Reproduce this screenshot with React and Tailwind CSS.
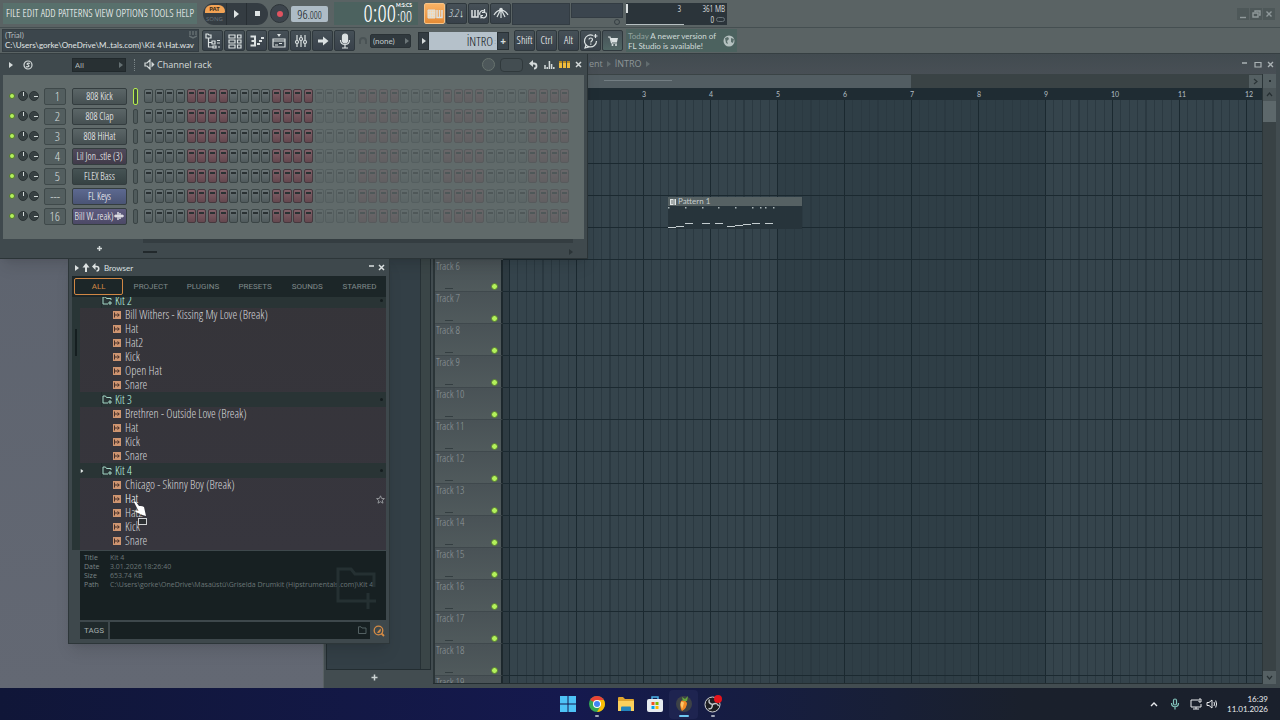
import clsx from 'clsx'

const condensed = 'font-["Open_Sans_Condensed_Light","Roboto_Condensed","Liberation_Sans_Narrow",sans-serif]'

const menus = ['FILE', 'EDIT', 'ADD', 'PATTERNS', 'VIEW', 'OPTIONS', 'TOOLS', 'HELP']

const channels = [
  { num: '1', name: '808 Kick', tone: 'from-[#5b6667] to-[#465052]', selected: true },
  { num: '2', name: '808 Clap', tone: 'from-[#5b6667] to-[#465052]' },
  { num: '3', name: '808 HiHat', tone: 'from-[#5b6667] to-[#465052]' },
  { num: '4', name: 'Lil Jon..stle (3)', tone: 'from-[#504a5b] to-[#413b4a]' },
  { num: '5', name: 'FLEX Bass', tone: 'from-[#465354] to-[#364243]' },
  { num: '---', name: 'FL Keys', tone: 'from-[#5d6990] to-[#4a5475]' },
  { num: '16', name: 'Bill W..reak)', tone: 'from-[#5f5c80] to-[#4c4966]', wave: true },
]

const folders = [
  { name: 'Kit 2', items: ['Bill Withers - Kissing My Love (Break)', 'Hat', 'Hat2', 'Kick', 'Open Hat', 'Snare'] },
  { name: 'Kit 3', items: ['Brethren - Outside Love (Break)', 'Hat', 'Kick', 'Snare'] },
  { name: 'Kit 4', open: true, items: ['Chicago - Skinny Boy (Break)', 'Hat', 'Hat2', 'Kick', 'Snare'] },
]

const info = [
  ['Title', 'Kit 4'],
  ['Date', '3.01.2026 18:26:40'],
  ['Size', '653.74 KB'],
  ['Path', 'C:\\Users\\gorke\\OneDrive\\Masaüstü\\Griselda Drumkit (Hipstrumentals.com)\\Kit 4'],
]

const tracks = [6, 7, 8, 9, 10, 11, 12, 13, 14, 15, 16, 17, 18, 19]
const bars = [3, 4, 5, 6, 7, 8, 9, 10, 11, 12]

function Icon({ children, size = 16, w, h, className }) {
  return (
    <svg width={w || size} height={h || size} viewBox={`0 0 ${w || 16} ${h || 16}`} fill="none" stroke="currentColor"
      strokeWidth="1.2" className={clsx('shrink-0', className)} aria-hidden="true">
      {children}
    </svg>
  )
}

function Caret({ className }) {
  return <Icon w={4} h={6} className={className}><path d="M0 0L4 3L0 6Z" fill="currentColor" stroke="none" /></Icon>
}

function ToolButton({ label, className, children }) {
  return (
    <button aria-label={label}
      className={clsx('w-[21px] h-[21px] shrink-0 flex items-center justify-center rounded-xs border border-[#2f383d] bg-linear-to-b from-[#465057] to-[#38414a] text-[#dbe1e2]', className)}>
      {children}
    </button>
  )
}

function TopRow() {
  return (
    <div className="h-[28px] flex items-center border-b border-[#454f51] px-[3px]">
      <nav className={clsx('w-[194px] h-[21px] shrink-0 flex items-center justify-between bg-[#58706c] px-[3px] text-[11px] text-white', condensed)}>
        {menus.map(m => <button key={m}>{m}</button>)}
      </nav>

      {/* Transport */}
      <div className="ml-[6px] h-[22px] flex rounded-full bg-[#343c42] overflow-hidden shrink-0">
        <button className="w-[23px] h-full flex flex-col justify-start items-center text-[6px] leading-[8px] text-[#66717a]">
          <span className="mt-[2px] w-[20px] h-[8px] rounded-t-lg rounded-br-xs bg-[#f2a355] text-[#3d2b18] font-bold">PAT</span>
          <span className="mt-[2px]">SONG</span>
        </button>
        <button aria-label="Play" className="w-[20px] flex items-center justify-center text-[#dfe4e4] border-l border-[#272e33]">
          <Icon w={5} h={8}><path d="M0 0L5 4L0 8Z" fill="currentColor" stroke="none" /></Icon>
        </button>
        <button aria-label="Stop" className="w-[22px] flex items-center justify-center border-l border-[#272e33]">
          <span className="w-[5px] h-[5px] bg-[#dfe4e4]" />
        </button>
      </div>
      <button aria-label="Record" className="ml-[2px] w-[19px] h-[19px] shrink-0 rounded-full bg-[#3c444c] border border-[#2d3439] flex items-center justify-center">
        <span className="w-[6px] h-[6px] rounded-full bg-[#e05360]" />
      </button>
      <button className={clsx('ml-[2px] w-[37px] h-[16px] shrink-0 rounded-xs bg-[#aebcc6] text-[#0c1215] flex items-baseline justify-center text-[13px] leading-[16px]', condensed)}>
        96<span className="text-[10px]">.000</span>
      </button>

      <div className={clsx('ml-[6px] w-[84px] h-[23px] shrink-0 bg-[#4c625f] text-white flex items-center justify-end pr-[6px]', condensed)}>
        <span className="text-[23px] leading-[23px]">0:00</span>
        <span className="flex flex-col items-end">
          <span className="text-[5px] leading-[6px] font-bold font-[Lato,sans-serif]">M:S:CS</span>
          <span className="text-[15px] leading-[17px]">:00</span>
        </span>
      </div>

      <div className="ml-[6px] flex gap-px shrink-0">
        <ToolButton label="Typing keyboard" className="from-[#f9b264] to-[#e58b35] border-[#f7c387] text-[#4a2d12]">
          <Icon><path d="M1 4H8V12H1Z" fill="#fbd5a3" strokeWidth="1" /><path d="M1 6.700H8M1 9.300H8M3.300 4V12M5.700 4V12" strokeWidth=".8" /><path d="M10 4V11.500H15V4M12.500 4V11" strokeWidth="1.500" /></Icon>
        </ToolButton>
        <ToolButton label="Countdown" className={clsx('text-[11px] italic', condensed)}>3.2↓</ToolButton>
        <ToolButton label="Loop record">
          <Icon><path d="M1 4V11H7V4M4 4V11" strokeWidth="1.500" /><path d="M9 9A3 3 0 0 1 13 5L14 6M14.500 6.500A3 3 0 0 1 10.500 11L9.500 10M13.500 3V6.500H11M10 12.500V9.500H12" /></Icon>
        </ToolButton>
        <ToolButton label="Metronome">
          <Icon><path d="M1 9Q4 4 8 4.500Q12 4 15 9M8 4.500V12M7 5L4 11M9 5L12 11" /><circle cx="8" cy="3.500" r="1.200" fill="currentColor" /></Icon>
        </ToolButton>
      </div>

      <div className="ml-px w-[58px] h-[22px] shrink-0 bg-[#3b454e] border border-[#333c43]" />
      <div className="ml-px w-[52px] h-[22px] shrink-0 flex flex-col">
        <div className="h-[15px] bg-[#3b454e] border border-[#333c43]" />
        <span className="mt-px mr-[3px] w-[6px] h-[6px] rounded-full border border-[#353e43] self-end" />
      </div>

      <div className={clsx('ml-[3px] w-[101px] h-[22px] shrink-0 bg-[#2b343a] flex text-[9px] leading-[11px] text-white', condensed)}>
        <div className="w-[58px] border-b border-[#b6bfc1] flex justify-between pr-[3px]">
          <span className="w-[2px] h-[9px] mt-px bg-[#dbe0e1]" /><span>3</span>
        </div>
        <div className="flex-1 flex flex-col items-end pr-[2px]">
          <span>361 MB</span>
          <span className="flex items-center gap-[2px]">0 <span className="w-[9px] h-[5px] rounded-full border border-[#69747a]" /></span>
        </div>
      </div>

      <div className="ml-auto flex gap-px mr-[2px] text-[#90999b]">
        {['M3 9.500H9', 'M3 5H8V9H3ZM5 4V3H10V7H9', 'M3.500 3.500L8.500 8.500M8.500 3.500L3.500 8.500'].map((d, i) => (
          <button key={i} aria-label={['Minimize', 'Restore', 'Close'][i]} className="w-[12px] h-[12px] bg-[#4e5859]">
            <Icon w={12} h={12}><path d={d} strokeWidth="1.4" /></Icon>
          </button>
        ))}
      </div>
    </div>
  )
}

function SecondRow() {
  return (
    <div className="h-[26px] flex items-center border-b border-[#363f42] pl-[2px]">
      <div className="w-[197px] h-[23px] shrink-0 bg-[#3c464c] border border-[#343d42] pl-[2px] flex text-[8px] leading-[10px] text-[#e2e7e7] font-[Lato,sans-serif] relative">
        <p className="flex-1 whitespace-nowrap"><span className="text-[#b2babb]">(Trial)</span><br />C:\Users\gorke\OneDrive\M..tals.com)\Kit 4\Hat.wav</p>
        <Icon w={8} h={8} className="absolute right-px top-px text-[#667073]"><path d="M1 0V4M4 0V4M7 0V4M0 5L4 7L8 5" strokeWidth="1.4" /></Icon>
      </div>
      <div className="ml-[3px] flex gap-px shrink-0">
        <ToolButton label="Browser"><Icon><path d="M1 1H3L4 2H6V5H1ZM3.500 5V14H8M3.500 9.500H7M7 8H10V11H7ZM8 13H11V15H8ZM12 7.500H15M12 10H15M13 14H15" /></Icon></ToolButton>
        <ToolButton label="Channel rack"><Icon><path d="M2 2H8V5H2ZM2 7H8V10H2ZM2 12H8V15H2ZM10.500 2H14V5H10.500ZM10.500 7H14V10H10.500ZM10.500 12H14V15H10.500Z" /></Icon></ToolButton>
        <ToolButton label="Piano roll"><Icon><path d="M1.500 3.500H6V12.500H1.500M2.500 8H6" strokeWidth="2" /><path d="M8 11H11M10 8H13M12 5H15" strokeWidth="2" /></Icon></ToolButton>
        <ToolButton label="Playlist"><Icon><path d="M2 6H14V14H2ZM2 8H14M4 12H7M8 10.500H11" /><path d="M6 1H10L8 4Z" fill="currentColor" stroke="none" /></Icon></ToolButton>
        <ToolButton label="Mixer"><Icon><path d="M4 2V14M8 2V14M12 2V14" /><circle cx="4" cy="9" r="1.500" fill="#3e474f" /><circle cx="8" cy="6" r="1.500" fill="#3e474f" /><circle cx="12" cy="9" r="1.500" fill="#3e474f" /></Icon></ToolButton>
        <ToolButton label="Next"><Icon><path d="M3 6.500H8V3.500L13.500 8L8 12.500V9.500H3Z" fill="currentColor" stroke="none" /></Icon></ToolButton>
        <ToolButton label="Microphone"><Icon><rect x="5.500" y="1" width="5" height="9" rx="2.500" fill="currentColor" /><path d="M3.500 7C3.500 13 12.500 13 12.500 7M8 11.500V15M5 15H11" /></Icon></ToolButton>
      </div>
      <Icon w={10} h={12} className="ml-[3px] text-[#4a5355]"><path d="M2 9V6A3 3 0 0 1 8 6V9" strokeWidth="2" /></Icon>
      <div className="ml-[2px] relative shrink-0 flex items-center">
        <select aria-label="Snap" className="appearance-none w-[41px] h-[14px] bg-[#30393e] border border-[#2a3236] rounded-xs pl-[2px] text-[8px] leading-[12px] text-[#c2cacb] font-[Lato,sans-serif]">
          <option>(none)</option>
        </select>
        <Caret className="absolute right-[2px] text-[#6c7679]" />
      </div>
      <div className="ml-[7px] h-[18px] flex shrink-0">
        <button aria-label="Pattern menu" className="w-[11px] bg-[#333c42] border border-[#293135] flex items-center justify-center text-[#d5dbdb]"><Caret /></button>
        <button className={clsx('w-[68px] bg-[#b5c1ca] text-[#0c1215] text-[13px] leading-[18px] flex justify-end items-center', condensed)}>
          İNTRO<span className="w-[4px] text-[8px] text-[#6e7b83]">:</span>
        </button>
        <button className="w-[12px] bg-[#3a444b] border border-[#293135] text-[#d5dbdb] text-[10px] leading-[14px] font-bold">+</button>
      </div>
      <div className={clsx('ml-[5px] flex gap-px shrink-0 text-[11px]', condensed)}>
        <ToolButton className="text-white">Shift</ToolButton>
        <ToolButton className="text-white">Ctrl</ToolButton>
        <ToolButton className="text-white">Alt</ToolButton>
        <ToolButton label="Help"><Icon><path d="M10 2.500A6 6 0 1 0 13.500 8M3 12L2 15L6 14M12.500 1V5M10.500 3H14.500" /><path d="M6 6.500C6 4.500 9.500 4.500 9.500 6.500C9.500 8 7.800 8 7.800 9.500M7.800 10.500V11.700" /></Icon></ToolButton>
        <ToolButton label="Shop" className="from-[#5c7270] to-[#516765] text-[#b2c1bf]">
          <Icon><path d="M3 4H5L6.500 10H12" /><path d="M5.500 5H13L12 9H6.500Z" fill="currentColor" stroke="none" /><circle cx="7.500" cy="12" r="1" fill="currentColor" stroke="none" /><circle cx="11" cy="12" r="1" fill="currentColor" stroke="none" /></Icon>
        </ToolButton>
      </div>
      <div className="ml-[3px] w-[111px] h-[23px] shrink-0 bg-[#4c625f] flex items-center justify-between px-[2px] text-[8px] leading-[10px] text-[#d1dbd9] font-[Lato,sans-serif]">
        <p className="whitespace-nowrap"><span className="text-[#92a29f]">Today</span> A newer version of<br />FL Studio is available!</p>
        <Icon w={12} h={12}><circle cx="6" cy="6" r="5.500" fill="#b5c1c0" stroke="none" /><path d="M2 3L5 2L6 4L4 6L5 9L3 8ZM8 3L11 4L10 8L8 7Z" fill="#5a6e6b" stroke="none" /></Icon>
      </div>
    </div>
  )
}

function Step({ red, dim, label }) {
  return (
    <button aria-label={label}
      className={clsx('w-[9px] h-[14px] rounded-xs border bg-linear-to-b flex justify-center',
        dim && 'opacity-30',
        red ? 'border-[#45383e] from-[#806068] to-[#65484f]' : 'border-[#3b4546] from-[#6a7476] to-[#505a5c]')}>
      <span className="mt-[2px] w-[5px] h-[2px] bg-[#2a3133]" />
    </button>
  )
}

function ChannelRow({ ch }) {
  return (
    <div className="h-[20px] flex items-center pl-[6px] pr-[13px]">
      <button aria-label="Mute" className="w-[6px] h-[6px] rounded-full bg-[#b4f15b] border border-[#4f7430]" />
      <span className="ml-[3px] w-[10px] h-[10px] rounded-full bg-[#384143] border border-[#2b3335] flex justify-center"><span className="w-px h-[4px] bg-[#d4dada]" /></span>
      <span className="ml-px w-[10px] h-[10px] rounded-full bg-[#384143] border border-[#2b3335] flex items-center justify-end"><span className="w-[4px] h-px bg-[#d4dada]" /></span>
      <button className={clsx('ml-[5px] w-[22px] h-[17px] rounded-xs border border-[#3f494a] bg-[#535e5f] text-[13px] leading-[15px] text-[#d8dede] text-right pr-[5px]', condensed)}>{ch.num}</button>
      <button className={clsx('ml-[6px] w-[55px] h-[17px] shrink-0 rounded-xs border border-[#343d3f] bg-linear-to-b text-[10px] leading-[15px] text-white whitespace-nowrap flex items-center justify-center gap-px', condensed, ch.tone)}>
        {ch.name}
        {ch.wave && <Icon w={10} h={10}><path d="M0 5H10M2 3.500V6.500M4 1V9M6 2V8M8 3.500V6.500" /></Icon>}
      </button>
      <button aria-label={`Select ${ch.name}`}
        className={clsx('ml-[6px] w-[5px] rounded-xs border', ch.selected ? 'h-[17px] border-[#b7ec4e] bg-[#3e5040]' : 'h-[15px] border-[#3a4445] bg-[#505b5c]')} />
      <div className="ml-[6px] flex-1 grid grid-cols-[repeat(40,minmax(0,1fr))]">
        {Array.from({ length: 40 }, (_, i) => (
          <Step key={i} label={`Step ${i + 1}`} red={Math.floor(i / 4) % 2 === 1} dim={i > 15} />
        ))}
      </div>
    </div>
  )
}

function ChannelRack() {
  return (
    <section className="absolute left-0 top-0 w-[588px] border-r border-b border-[#2b3437] bg-[#3f494d] shadow-lg z-10">
      <header className="h-[21px] flex items-center pl-[9px] pr-[4px] text-[#d4dada]">
        <Caret />
        <Icon w={12} h={12} className="ml-[9px]"><circle cx="6" cy="6" r="4" /><path d="M8 4.500Q6 3.500 5 5Q7 6 7 7Q5.500 8.500 4 7.500" /></Icon>
        <div className="ml-[38px] relative flex items-center">
          <select aria-label="Channel filter" className="appearance-none w-[54px] h-[14px] bg-[#283033] border border-[#21292c] pl-[2px] text-[8px] leading-[12px] text-[#b2babb] font-['Open_Sans',sans-serif]">
            <option>All</option>
          </select>
          <Caret className="absolute right-[3px] text-[#657073]" />
        </div>
        <span className="ml-[8px] h-[12px] border-l border-dotted border-[#7b8587]" />
        <Icon w={11} h={11} className="ml-[9px]"><path d="M1 4H3L6 1V10L3 7H1Z" /><path d="M7.500 2.500L10.500 5.500L7.500 8.500Z" fill="currentColor" stroke="none" /></Icon>
        <h2 className="ml-[2px] text-[9px] font-['Open_Sans',sans-serif]">Channel rack</h2>
        <span className="ml-auto w-[13px] h-[13px] rounded-full border border-[#68736f] bg-[#4d575a]" />
        <span className="ml-[5px] w-[23px] h-[14px] rounded-sm border border-[#30393c] bg-[#434d51]" />
        <button aria-label="Undo" className="ml-[6px]"><Icon w={9} h={10}><path d="M2 3.500H5A2.500 2.500 0 0 1 5 8.500" strokeWidth="1.800" /><path d="M0 3.500L4 0V7Z" fill="currentColor" stroke="none" /></Icon></button>
        <button aria-label="Graph editor" className="ml-[6px]"><Icon w={11} h={10}><path d="M1 9V5M3.200 9V7M5.400 9V1M7.600 9V4M9.800 9V7" strokeWidth="1.500" /></Icon></button>
        <button aria-label="Step editor" className="ml-[4px] flex gap-px">
          {[0, 1, 2].map(i => <span key={i} className="w-[3px] h-[7px] bg-[#f0bc3c] border-t-2 border-[#b98b20]" />)}
        </button>
        <button aria-label="Close" className="ml-[4px]"><Icon w={9} h={9}><path d="M2 2L7 7M7 2L2 7" strokeWidth="1.500" /></Icon></button>
      </header>
      <div className="mx-[3px] bg-[#606a6a] pt-[11px] pb-[13px]">
        {channels.map(ch => <ChannelRow key={ch.name} ch={ch} />)}
      </div>
      <footer className="h-[19px] flex items-center">
        <button aria-label="Add channel" className="ml-[95px] text-[#d4dada]"><Icon w={9} h={9}><path d="M4.500 2V7M2 4.500H7" strokeWidth="1.500" /></Icon></button>
        <div className="ml-[39px] mr-[14px] flex-1 self-stretch border-t-4 border-[#343d41] flex items-center">
          <span className="w-[14px] h-[2px] mt-[2px] bg-[#22292c]" />
          <Caret className="ml-auto mt-[2px] text-[#2b3437]" />
        </div>
      </footer>
    </section>
  )
}

function FileIcon() {
  return <Icon w={8} h={8}><path d="M0 0H8V8H0Z" fill="#cf9570" stroke="none" /><path d="M1.500 1.500V6.500M2 4H6M4.500 2.500L6.300 4L4.500 5.500" stroke="#46302a" strokeWidth="1" /></Icon>
}

function Browser() {
  return (
    <section className="absolute left-[68px] top-[204px] w-[322px] bg-[#3e484c] border border-[#2d3639] px-[3px] pb-[4px] shadow-lg z-10">
      <header className="h-[17px] flex items-center pl-[3px] text-[#dce1e1]">
        <Caret />
        <Icon w={8} h={9} className="ml-[3px]"><path d="M4 9V3" strokeWidth="2" /><path d="M0.500 4.500L4 0L7.500 4.500Z" fill="currentColor" stroke="none" /></Icon>
        <Icon w={8} h={9} className="ml-[2px]"><path d="M2 3.500H4.500A2.200 2.200 0 0 1 4.500 8" strokeWidth="1.600" /><path d="M0 3.500L3.500 0V7Z" fill="currentColor" stroke="none" /></Icon>
        <h2 className="ml-[4px] text-[8px] font-[Lato,sans-serif]">Browser</h2>
        <button aria-label="Minimize" className="ml-auto"><Icon w={8} h={9}><path d="M1 3H6" strokeWidth="1.500" /></Icon></button>
        <button aria-label="Close" className="ml-px"><Icon w={9} h={9}><path d="M2 2L7 7M7 2L2 7" strokeWidth="1.500" /></Icon></button>
      </header>
      <div className="h-[21px] bg-[#1c2628] flex items-center px-[2px] gap-[3px] text-[8px] text-[#7f898a] font-[Roboto,sans-serif]">
        {['ALL', 'PROJECT', 'PLUGINS', 'PRESETS', 'SOUNDS', 'STARRED'].map((t, i) => (
          <button key={t} className={clsx('flex-1 h-[17px] rounded-xs border', i === 0 ? 'border-[#d08745] text-[#d08745]' : 'border-transparent')}>{t}</button>
        ))}
      </div>
      <div className="flex h-[253px] bg-[#293536]">
        <div className="w-[8px] shrink-0"><div className="mt-[32px] ml-[3px] w-[2px] h-[27px] bg-[#151e20]" /></div>
        <div className="flex-1 overflow-hidden bg-linear-to-b from-[#353439] to-[#37363e]">
          <ul className={clsx('-mt-[4px] text-[12px] leading-[14px] text-[#d6d7da]', condensed)}>
            {folders.map(f => (
              <li key={f.name}>
                <div className="h-[15px] bg-[#293435] flex items-center pr-[3px] text-[#bff9e4]">
                  <span className="w-[22px] h-full border-r border-[#222c2e] flex items-center">{f.open && <Caret className="text-[#dfe5e4] scale-75" />}</span>
                  <Icon w={10} h={9} className="text-[#a3d6c6]"><path d="M9 4V2.500H4.500L3.500 1H1V8H6M8 5V9M6 7H10" strokeWidth="1" /></Icon>
                  <span className="ml-[3px]">{f.name}</span>
                  <span className="ml-auto w-[3px] h-[3px] rounded-full bg-[#151d1f]" />
                </div>
                <ul>
                  {f.items.map((it, i) => (
                    <li key={it} className={clsx('h-[14px] flex items-center pl-[33px] pr-px gap-[4px] whitespace-nowrap', f.open && i === 1 && 'text-white')}>
                      <FileIcon />{it}
                      {f.open && i === 1 && (
                        <Icon w={9} h={9} className="ml-auto text-[#9b9ea2]"><path d="M4.500 .8L5.600 3.400L8.400 3.600L6.300 5.400L7 8.200L4.500 6.700L2 8.200L2.700 5.400L.6 3.600L3.400 3.400Z" strokeWidth=".9" /></Icon>
                      )}
                    </li>
                  ))}
                </ul>
              </li>
            ))}
          </ul>
        </div>
      </div>
      <div className="ml-[8px] mt-px h-[69px] bg-[#172022] relative px-[4px] pt-[2px] text-[7px] leading-[9px] text-[#7b8687] font-['Open_Sans',sans-serif]">
        <dl className="grid grid-cols-[26px_1fr]">
          {info.map(([k, v]) => [<dt key={k}>{k}</dt>, <dd key={v} className="text-[#6b7677] whitespace-nowrap">{v}</dd>])}
        </dl>
        <Icon w={42} h={42} className="absolute right-[8px] top-[16px] text-[#253032]"><path d="M24 34H2V2H15L19 7H38V20M32 26V42M24 34H40" strokeWidth="3" /></Icon>
      </div>
      <div className="ml-[8px] mt-[2px] h-[17px] flex items-center gap-[2px]">
        <label htmlFor="tags" className="w-[28px] h-full bg-[#202a2c] text-center text-[8px] leading-[17px] text-[#a6afaf] font-[Roboto,sans-serif]">TAGS</label>
        <div className="relative flex-1 h-full">
          <input id="tags" className="block w-full h-full bg-[#172022] outline-none px-1 text-[8px] text-[#a6afaf]" />
          <Icon w={9} h={8} className="absolute right-[3px] top-[4px] text-[#536062]"><path d="M.5 7.500V.8H3L4 2H8V7.500Z" strokeWidth="1" /></Icon>
        </div>
        <button aria-label="Search" className="w-[14px] h-full flex items-center justify-center text-[#d58b45]">
          <Icon w={12} h={12}><circle cx="5.500" cy="5.500" r="4.300" strokeWidth="1.300" /><path d="M4 7.500L7.500 3.500A3 3 0 0 1 5 8Z" fill="currentColor" stroke="none" /><path d="M8.500 8.500L11 11" strokeWidth="1.800" /></Icon>
        </button>
      </div>
    </section>
  )
}

const notes = [[0, 17], [8, 16], [17, 13], [34, 13], [47, 13], [59, 16], [67, 15], [75, 14], [84, 13], [97, 13]]
const hits = [0, 17, 34, 50, 67, 84, 92, 97, 105]

function Clip() {
  return (
    <div className="absolute left-[165px] top-[97px] w-[134px] bg-[#27343b]">
      <div className="h-[9px] bg-[#566163] flex items-center gap-[2px] pl-[2px] text-[8px] leading-[9px] text-[#c5cccc] font-[Lato,sans-serif]">
        <Icon w={6} h={6}><path d="M0 0H6V6H0Z" fill="#dfe4e4" stroke="none" /><path d="M4 0V6M1 2H3M1 4H3" stroke="#465052" strokeWidth=".8" /></Icon>
        Pattern 1
      </div>
      <svg viewBox="0 0 134 23" className="block w-full h-[23px]" aria-hidden="true">
        {hits.map(x => <rect key={x} x={x} y="1" width="1.500" height="1.500" fill="#aab5b8" />)}
        {notes.map(([x, y]) => <rect key={x} x={x} y={y + 4} width="8" height="1" fill="#c3cccf" />)}
      </svg>
    </div>
  )
}

function Playlist() {
  return (
    <section className="ml-[323px] h-full bg-[#424c50] border-l border-[#586063] pr-[4px] pb-[4px] flex flex-col">
      <header className="h-[20px] shrink-0 flex items-center pl-[265px] pr-px text-[#8d9698] bg-linear-to-b from-[#424b50] to-[#484f55]">
        <h2 className="flex items-center gap-[4px] text-[9px] font-['Open_Sans',sans-serif]">ent <Caret className="text-[#626c6f]" /> <span>İNTRO</span> <Caret className="text-[#626c6f]" /></h2>
        <div className="ml-auto flex gap-[3px] text-[#aab2b4]">
          <button aria-label="Minimize"><Icon w={10} h={9}><path d="M2 3H7" strokeWidth="1.500" /></Icon></button>
          <button aria-label="Maximize"><Icon w={10} h={9}><path d="M2 2.500H8V7H2Z" /></Icon></button>
          <button aria-label="Close"><Icon w={9} h={9}><path d="M2 2L7 7M7 2L2 7" strokeWidth="1.300" /></Icon></button>
        </div>
      </header>
      <div className="flex-1 min-h-0 flex">
        {/* Pattern picker */}
        <div className="w-[109px] shrink-0 flex flex-col pl-[2px]">
          <div className="flex-1 mr-[2px] bg-[#333f46] border border-[#232d31] flex justify-end"><div className="w-[10px] bg-[#3a4547] border-l border-[#273135]" /></div>
          <button aria-label="Add pattern" className="h-[14px] shrink-0 flex items-center justify-center pr-[10px] text-[#cdd4d4]"><Icon w={9} h={9}><path d="M4.500 1.500V7.500M1.500 4.500H7.500" strokeWidth="1.500" /></Icon></button>
        </div>

        <div className="flex-1 min-w-0 flex flex-col border-b border-[#232d31]">
          <div className="h-[14px] shrink-0 flex bg-[#3a4345] ml-[70px] pt-px">
            <div className="w-[408px] shrink-0 bg-[#525d62] flex items-start"><span className="ml-[101px] mt-[5px] w-[68px] h-px bg-[#727d82]" /></div>
            <button aria-label="Scroll right" className="ml-auto w-[13px] bg-[#556063] text-[#2a3336] flex items-center justify-center"><Icon w={5} h={7}><path d="M1 1L4 3.500L1 6" /></Icon></button>
          </div>
          <div className="flex-1 min-h-0 flex">
            <div className="w-[70px] shrink-0 overflow-hidden border-l-2 border-[#2b3538] pt-[172px]">
              {tracks.map(t => (
                <div key={t} className="h-[32px] relative border-b border-[#3f484c] border-r-2 border-r-[#1d282d] bg-linear-to-b from-[#495256] to-[#505a5c] pl-px pr-[3px] flex justify-between">
                  <span className={clsx('text-[11px] leading-[12px] text-[#8f989a]', condensed)}>Track {t}</span>
                  <span className="absolute left-[10px] bottom-[2px] w-[8px] h-px bg-[#343e41]" />
                  <button aria-label={`Mute track ${t}`} className="mt-[23px] w-[7px] h-[7px] rounded-full bg-[#b4f15b] border border-[#567d31]" />
                </div>
              ))}
            </div>
            <div className="flex-1 min-w-0 flex flex-col overflow-hidden">
              <div className="h-[12px] shrink-0 bg-[#1f2c33] flex pl-[139px] text-[7px] leading-[12px] text-[#b4bfc3] font-[Lato,sans-serif] overflow-hidden">
                {bars.map(b => <span key={b} className="w-[67px] shrink-0">{b}</span>)}
              </div>
              <div className="relative flex-1 bg-[#35444c]">
                <div className="absolute inset-y-0 left-0 w-[7px] bg-[#2e3b42]" />
                <div className="absolute inset-y-0 left-[275px] w-[268px] bg-[#2f3e46]" />
                <div className="absolute inset-y-0 left-[6px] right-0 bg-[repeating-linear-gradient(90deg,#1b2930_0,#1b2930_1px,transparent_1px,transparent_67px),repeating-linear-gradient(90deg,#2b3941_0,#2b3941_1px,transparent_1px,transparent_8.375px)]" />
                <div className="absolute inset-0 bg-[repeating-linear-gradient(180deg,transparent_0,transparent_31px,#1b2930_31px,#1b2930_32px)]" />
                <Clip />
              </div>
            </div>
          </div>
        </div>
        <div className="w-[14px] shrink-0 bg-[#394245] flex flex-col border-l border-[#2b3538] text-[#262f32]">
          <button aria-label="Zoom" className="h-[14px] bg-[#556063] flex items-center justify-center"><span className="w-[2px] h-[2px] bg-[#262f32]" /></button>
          <button aria-label="Scroll up" className="h-[13px] bg-[#4b5558] flex items-center justify-center"><Icon w={7} h={5}><path d="M1 4L3.500 1L6 4" /></Icon></button>
          <div className="h-[21px] bg-[#5d686b]" />
          <button aria-label="Scroll down" className="mt-auto h-[13px] bg-[#556063] flex items-center justify-center"><Icon w={7} h={5}><path d="M1 1L3.500 4L6 1" /></Icon></button>
        </div>
      </div>
    </section>
  )
}

function Pointer() {
  return (
    <svg className="absolute left-[133px] top-[447px] z-20" width="16" height="27" viewBox="0 0 16 27" aria-hidden="true">
      <path d="M1 1Q2 0 3 1L6 5Q9 4.500 11 6L13 15L9.500 14L5 12Q1.500 11 2 9.500L5.500 10Z" fill="#fff" />
      <rect x="5.500" y="17.500" width="8" height="6" fill="#2d3033" stroke="#d0d2d4" />
    </svg>
  )
}

function AppIcon({ label, running, active, children }) {
  return (
    <button aria-label={label} className={clsx('w-[29px] h-[29px] rounded-sm flex flex-col items-center pt-[5px]', active && 'bg-[#1e2450]')}>
      <svg width="18" height="18" viewBox="0 0 18 18" aria-hidden="true">{children}</svg>
      {running && <span className={clsx('mt-[2px] h-[2px] shrink-0 rounded-full', active ? 'w-[10px] bg-[#6dc7f2]' : 'w-[4px] bg-[#a0a6b8]')} />}
    </button>
  )
}

function Taskbar() {
  return (
    <footer className="h-[32px] shrink-0 grid grid-cols-[1fr_auto_1fr] items-center bg-linear-to-r from-[#101638] via-[#15194e] via-45% to-[#1a202c] to-80%">
      <span />
      <div className="flex">
        <AppIcon label="Start"><path d="M1 1H8.500V8.500H1ZM9.500 1H17V8.500H9.500ZM1 9.500H8.500V17H1ZM9.500 9.500H17V17H9.500Z" fill="#4ec3f7" /></AppIcon>
        <AppIcon label="Chrome" running>
          <circle cx="9" cy="9" r="8" fill="#34a853" />
          <path d="M9 9L2.100 5A8 8 0 0 1 15.900 5Z" fill="#ea4335" />
          <path d="M9 5H15.900A8 8 0 0 1 9 17L12.500 11Z" fill="#fbbc05" />
          <circle cx="9" cy="9" r="4" fill="#fff" /><circle cx="9" cy="9" r="3" fill="#4285f4" />
        </AppIcon>
        <AppIcon label="Files">
          <path d="M1 3Q1 2 2 2H6L8 4H16Q17 4 17 5V15H1Z" fill="#e0a52d" />
          <path d="M1 6H17V16H1Z" fill="#fbd05c" />
          <path d="M4 16V12.500Q4 11.500 5 11.500H13Q14 11.500 14 12.500V16Z" fill="#2385bd" />
        </AppIcon>
        <AppIcon label="Store">
          <path d="M6 5V2H12V5" fill="none" stroke="#4bb3e8" strokeWidth="1.500" />
          <rect x="1" y="4" width="16" height="13" rx="2" fill="#e6ebf0" />
          <path d="M5.500 7H8.500V10H5.500Z" fill="#f25022" /><path d="M9.500 7H12.500V10H9.500Z" fill="#7fba00" />
          <path d="M5.500 11H8.500V14H5.500Z" fill="#00a4ef" /><path d="M9.500 11H12.500V14H9.500Z" fill="#ffb900" />
        </AppIcon>
        <AppIcon label="FL Studio" running active>
          <circle cx="9" cy="9" r="8" fill="#3d4247" />
          <path d="M6 6Q10 4 12 8Q12 13 7 16Q4 11 6 6Z" fill="#f28a24" />
          <path d="M6 7Q8 6 9 8Q8 12 7 14Q5 10 6 7Z" fill="#fbc66a" />
          <path d="M8 6L7 2L10 4L13 1L12 6Z" fill="#68a83c" />
        </AppIcon>
        <AppIcon label="OBS" running>
          <circle cx="8.500" cy="9.500" r="7.500" fill="#1d1e22" stroke="#d3d5d8" />
          <path d="M8.500 9.500Q3.500 8 5.500 4.500M8.500 9.500Q13 7 14.500 11M8.500 9.500Q8 15 4.500 13.500" stroke="#c2c4c8" strokeWidth="1.500" fill="none" />
          <circle cx="14" cy="4" r="4" fill="#e5141c" />
        </AppIcon>
      </div>
      <div className="flex items-center justify-end pr-[12px] text-[#e8eaed]">
        <Icon w={8} h={6}><path d="M1 5L4 2L7 5" strokeWidth="1.400" /></Icon>
        <Icon w={10} h={12} className="ml-[12px] text-[#83c5bd]"><rect x="3.500" y="1" width="3" height="6" rx="1.500" /><path d="M1.500 5C1.500 10 8.500 10 8.500 5M5 9V11.500" /></Icon>
        <Icon w={12} h={12} className="ml-[10px]"><path d="M8 2H1V9H11V6M3 11H9M6 9V11M9 1H11V4H9Z" strokeWidth="1" /></Icon>
        <Icon w={13} h={12} className="ml-[4px]"><path d="M1 4.500H3L6 2V10L3 7.500H1ZM8 4Q9 6 8 8M9.700 2.500Q11.500 6 9.700 9.500" strokeWidth="1" /></Icon>
        <p className="ml-[8px] text-right text-[8px] leading-[10px] font-[Lato,sans-serif]">16:39<br />11.01.2026</p>
      </div>
    </footer>
  )
}

export default function App() {
  return (
    <div className="h-screen flex flex-col overflow-hidden bg-[#5c6470] select-none">
      <div className="shrink-0 bg-[#5a6364]">
        <TopRow />
        <SecondRow />
      </div>
      <main className="relative flex-1 min-h-0 bg-linear-to-b from-[#5c626d] to-[#636873]">
        <Playlist />
        <ChannelRack />
        <Browser />
        <Pointer />
      </main>
      <Taskbar />
    </div>
  )
}
